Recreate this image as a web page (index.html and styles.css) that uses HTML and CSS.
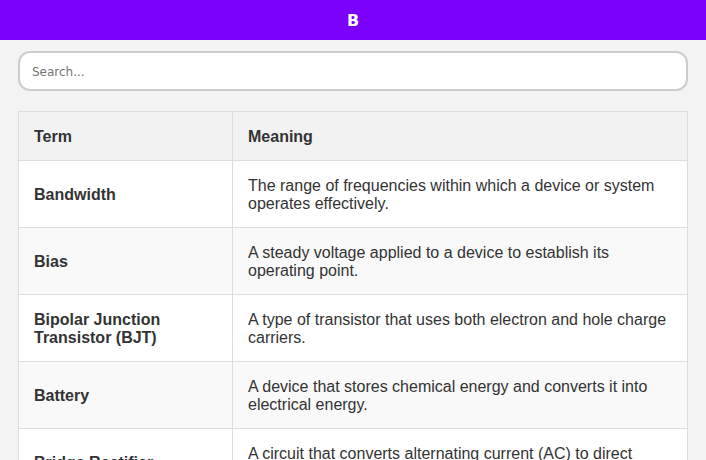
FILE: index.html
```html
<!DOCTYPE html>
<html lang="en">
<head>
<meta charset="utf-8">
<title>B</title>
<link rel="stylesheet" href="styles.css">
</head>
<body>
<header class="topbar">B</header>
<main class="content">
  <input class="search" type="text" placeholder="Search...">
  <table class="glossary">
    <colgroup><col class="col-term"><col class="col-meaning"></colgroup>
    <thead>
      <tr><th>Term</th><th>Meaning</th></tr>
    </thead>
    <tbody>
      <tr><td class="term">Bandwidth</td><td>The range of frequencies within which a device or system operates effectively.</td></tr>
      <tr><td class="term">Bias</td><td>A steady voltage applied to a device to establish its operating point.</td></tr>
      <tr><td class="term">Bipolar Junction Transistor (BJT)</td><td>A type of transistor that uses both electron and hole charge carriers.</td></tr>
      <tr><td class="term">Battery</td><td>A device that stores chemical energy and converts it into electrical energy.</td></tr>
      <tr><td class="term">Bridge Rectifier</td><td>A circuit that converts alternating current (AC) to direct current (DC) using four diodes.</td></tr>
      <tr><td class="term">Base</td><td>The middle region of a bipolar junction transistor that controls current flow.</td></tr>
      <tr><td class="term">Baud Rate</td><td>The number of signal changes per second in a communication channel.</td></tr>
      <tr><td class="term">Binary</td><td>A number system that uses only two digits, 0 and 1.</td></tr>
      <tr><td class="term">Bit</td><td>The smallest unit of digital information, representing a 0 or 1.</td></tr>
      <tr><td class="term">Bleeder Resistor</td><td>A resistor used to discharge capacitors when power is removed.</td></tr>
      <tr><td class="term">Bode Plot</td><td>A graph of the frequency response of a system, showing gain and phase.</td></tr>
      <tr><td class="term">Boolean Algebra</td><td>A branch of algebra dealing with logical operations on binary values.</td></tr>
      <tr><td class="term">Breadboard</td><td>A reusable board used for building prototype circuits without soldering.</td></tr>
      <tr><td class="term">Breakdown Voltage</td><td>The voltage at which an insulator or junction begins to conduct heavily.</td></tr>
      <tr><td class="term">Buck Converter</td><td>A DC-to-DC converter that steps down voltage from input to output.</td></tr>
      <tr><td class="term">Buffer</td><td>A circuit that isolates one stage from another without changing the signal.</td></tr>
      <tr><td class="term">Bus</td><td>A set of conductors that carries data or power between components.</td></tr>
      <tr><td class="term">Bypass Capacitor</td><td>A capacitor that shunts noise from a power supply line to ground.</td></tr>
      <tr><td class="term">Byte</td><td>A unit of digital information consisting of eight bits.</td></tr>
    </tbody>
  </table>
</main>
</body>
</html>
```
FILE: styles.css
```css
html, body {
  margin: 0;
  padding: 0;
}
body {
  background: #f3f3f3;
  font-family: "DejaVu Sans", sans-serif;
  color: #333;
}
.topbar {
  height: 40px;
  background: #7a00f9;
  color: #fff;
  font-weight: bold;
  font-size: 16px;
  display: flex;
  align-items: center;
  justify-content: center;
}
.content {
  padding: 11px 18px 18px;
  display: flex;
  flex-direction: column;
  gap: 20px;
}
.search {
  box-sizing: border-box;
  width: 100%;
  height: 40px;
  border: 2px solid #ccc;
  border-radius: 12px;
  background: #fff;
  padding: 1px 12px 0;
  font-family: "DejaVu Sans", sans-serif;
  font-size: 12px;
  color: #333;
  outline: none;
}
.search::placeholder {
  color: #757575;
}
.glossary {
  width: 100%;
  border-collapse: collapse;
  table-layout: fixed;
  font-family: "Liberation Sans", Arial, sans-serif;
  font-size: 16px;
  color: #333;
  background: #fff;
}
.col-term { width: 214px; }
.glossary th,
.glossary td {
  border: 1px solid #ddd;
  padding: 16px 15px 14px;
  text-align: left;
  vertical-align: middle;
}
.glossary th {
  background: #f2f2f2;
  font-weight: bold;
}
.glossary td.term {
  font-weight: bold;
}
.glossary tbody tr:nth-child(even) td {
  background: #f9f9f9;
}
```
